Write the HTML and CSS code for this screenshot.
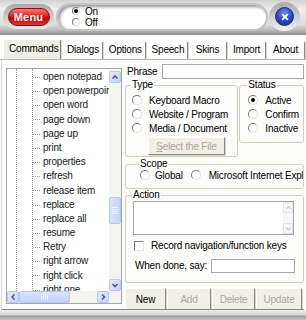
FILE: index.html
```html
<!DOCTYPE html>
<html lang="en">
<head>
    <meta charset="UTF-8">
    <title>Voice Commands</title>
    <link rel="stylesheet" href="styles.css">
</head>
<body>
    <div class="app">
        <header class="topbar">
            <div class="menu-socket">
                <button class="menu-btn">Menu</button>
            </div>
            <div class="mode">
                <label class="mode-opt"><span class="radio checked"></span>On</label>
                <label class="mode-opt"><span class="radio"></span>Off</label>
            </div>
            <div class="close-ring">
                <span class="close-btn">
                    <svg viewBox="0 0 10 10" width="8" height="8">
                        <path d="M2 2 L8 8 M8 2 L2 8" stroke="#fff" stroke-width="2.2" stroke-linecap="round"/>
                    </svg>
                </span>
            </div>
        </header>

        <nav class="tabs">
            <span class="tab active">Commands</span>
            <span class="tab">Dialogs</span>
            <span class="tab">Options</span>
            <span class="tab">Speech</span>
            <span class="tab">Skins</span>
            <span class="tab">Import</span>
            <span class="tab">About</span>
        </nav>

        <main class="panel">
            <div class="tree">
                <div class="tree-view">
                    <div class="tree-level">
                        <ul class="tree-items">
                            <li>open notepad</li>
                            <li>open powerpoint</li>
                            <li>open word</li>
                            <li>page down</li>
                            <li>page up</li>
                            <li>print</li>
                            <li>properties</li>
                            <li>refresh</li>
                            <li>release item</li>
                            <li>replace</li>
                            <li>replace all</li>
                            <li>resume</li>
                            <li>Retry</li>
                            <li>right arrow</li>
                            <li>right click</li>
                            <li>right one</li>
                        </ul>
                    </div>
                </div>
                <div class="vscroll">
                    <span class="sb-btn">
                        <svg viewBox="0 0 8 8" width="8" height="8"><path d="M1.5 5.5 L4 3 L6.5 5.5" fill="none" stroke="#4d6185" stroke-width="1.6"/></svg>
                    </span>
                    <span class="sb-space top"></span>
                    <span class="sb-thumb vertical"></span>
                    <span class="sb-space"></span>
                    <span class="sb-btn">
                        <svg viewBox="0 0 8 8" width="8" height="8"><path d="M1.5 3 L4 5.5 L6.5 3" fill="none" stroke="#4d6185" stroke-width="1.6"/></svg>
                    </span>
                </div>
                <div class="hscroll">
                    <span class="sb-btn">
                        <svg viewBox="0 0 8 8" width="8" height="8"><path d="M5.5 1.5 L3 4 L5.5 6.5" fill="none" stroke="#4d6185" stroke-width="1.6"/></svg>
                    </span>
                    <span class="sb-thumb horizontal"></span>
                    <span class="sb-space"></span>
                    <span class="sb-btn">
                        <svg viewBox="0 0 8 8" width="8" height="8"><path d="M3 1.5 L5.5 4 L3 6.5" fill="none" stroke="#4d6185" stroke-width="1.6"/></svg>
                    </span>
                </div>
                <div class="corner"></div>
            </div>

            <div class="editor">
                <div class="phrase-row">
                    <span class="label">Phrase</span>
                    <span class="field phrase"></span>
                </div>

                <div class="group-row">
                    <fieldset class="group type">
                        <legend>Type</legend>
                        <label class="opt"><span class="radio"></span>Keyboard Macro</label>
                        <label class="opt"><span class="radio"></span>Website / Program</label>
                        <label class="opt"><span class="radio"></span>Media / Document</label>
                        <button class="btn file" disabled><u>S</u>elect the File</button>
                    </fieldset>
                    <fieldset class="group status">
                        <legend>Status</legend>
                        <label class="opt"><span class="radio checked"></span>Active</label>
                        <label class="opt"><span class="radio"></span>Confirm</label>
                        <label class="opt"><span class="radio"></span>Inactive</label>
                    </fieldset>
                </div>

                <fieldset class="group scope">
                    <legend>Scope</legend>
                    <div class="scope-row">
                        <label class="opt"><span class="radio"></span>Global</label>
                        <label class="opt app-opt"><span class="radio"></span>Microsoft Internet Explorer</label>
                    </div>
                </fieldset>

                <fieldset class="group action">
                    <legend>Action</legend>
                    <div class="textarea">
                        <div class="mini-scroll">
                            <span class="mini-btn">
                                <svg viewBox="0 0 8 8" width="7" height="7"><path d="M1.5 5.5 L4 3 L6.5 5.5" fill="none" stroke="#c4c8d0" stroke-width="1.4"/></svg>
                            </span>
                            <span class="mini-btn">
                                <svg viewBox="0 0 8 8" width="7" height="7"><path d="M1.5 3 L4 5.5 L6.5 3" fill="none" stroke="#c4c8d0" stroke-width="1.4"/></svg>
                            </span>
                        </div>
                    </div>
                    <label class="opt check-row"><span class="checkbox"></span>Record navigation/function keys</label>
                    <div class="say-row">
                        <span class="label">When done, say:</span>
                        <span class="field say"></span>
                    </div>
                </fieldset>

                <div class="actions">
                    <button class="btn new">New</button>
                    <button class="btn add" disabled>Add</button>
                    <button class="btn delete" disabled>Delete</button>
                    <button class="btn update" disabled>Update</button>
                </div>
            </div>
        </main>

        <footer class="bottombar"></footer>
    </div>
</body>
</html>
```

FILE: styles.css
```css
:root {
    --text: #000;
    --disabled: #aca899;
    --group-border: #d0d0bf;
    --face: #f1efe6;
    --scroll-blue: #c1d3fb;
}

* {
    margin: 0;
    padding: 0;
    box-sizing: border-box;
}

body {
    font-family: 'Liberation Sans', Arial, sans-serif;
    font-size: 10px;
    letter-spacing: -0.2px;
    color: var(--text);
    background: #fff;
    width: 306px;
    height: 320px;
    overflow: hidden;
}

.app {
    width: 306px;
    height: 320px;
    display: flex;
    flex-direction: column;
    background: #fff;
}

/* top chrome */
.topbar {
    height: 35px;
    flex: none;
    display: flex;
    align-items: center;
    padding: 0 6px 2px 3px;
    background: linear-gradient(#d2d2d2 0, #efefef 25%, #dcdcdc 70%, #b9b9b9 86%, #8c8c8c 100%);
}

.menu-socket {
    width: 51px;
    height: 25px;
    border-radius: 13px;
    padding: 3px 4px;
    background: linear-gradient(#a8a8a8, #e8e8e8);
    display: flex;
    align-items: center;
    justify-content: center;
}

.menu-btn {
    width: 42px;
    height: 18px;
    border-radius: 9px;
    border: 1px solid #8a0c0c;
    background: linear-gradient(#f47a7a 0, #e02020 45%, #c40000 55%, #e23434 100%);
    color: #fff;
    font-family: 'Liberation Sans', Arial, sans-serif;
    font-size: 11px;
    font-weight: bold;
    letter-spacing: 0.2px;
}

.mode {
    flex: 1;
    height: 28px;
    margin-left: 2px;
    border-radius: 14px;
    background: #fff;
    border: 2px solid #c4c4c4;
    box-shadow: inset 2px 2px 3px #9a9a9a;
    display: flex;
    flex-direction: column;
    justify-content: center;
    padding-left: 14px;
    line-height: 11px;
    font-size: 10px;
}

.mode-opt {
    display: flex;
    align-items: center;
    gap: 5px;
}

.mode-opt .radio {
    width: 8px;
    height: 8px;
}

.close-ring {
    width: 31px;
    height: 29px;
    margin-left: 1px;
    border-radius: 50%;
    background: linear-gradient(#a9a9a9, #f2f2f2);
    display: flex;
    align-items: center;
    justify-content: center;
}

.close-btn {
    width: 19px;
    height: 19px;
    border-radius: 50%;
    background: radial-gradient(circle at 50% 30%, #6f8fe8 0, #2446c4 55%, #132e8f 100%);
    border: 1px solid #1a2c72;
    display: flex;
    align-items: center;
    justify-content: center;
}

/* tabs */
.tabs {
    height: 25px;
    flex: none;
    display: flex;
    align-items: flex-end;
    padding: 0 0 0 3px;
    border-bottom: 1px solid #b8b8b0;
}

.tab {
    min-width: 38px;
    height: 17px;
    line-height: 16px;
    padding: 0 5px;
    text-align: center;
    border-right: 1px solid #8a8a80;
    box-shadow: 1px 0 0 #d8d8d0;
    margin-right: 1px;
}

.tab.active {
    height: 19px;
    line-height: 18px;
    background: #efeee6;
    border-left: 1px solid #fff;
}

/* content pane */
.panel {
    flex: 1;
    display: flex;
    align-items: flex-start;
    gap: 3px;
    padding: 4px 0 0 4px;
    margin: 0 2px 0 1px;
    border-left: 1px solid #d8d8d0;
    border-bottom: 1px solid #8a8a80;
    background: #fcfcfa;
    overflow: hidden;
}

.tree {
    width: 117px;
    height: 236px;
    margin-top: 4px;
    border: 1px solid #a7a6aa;
    background: #fff;
    display: grid;
    grid-template-columns: 1fr 12px;
    grid-template-rows: 1fr 12px;
}

.tree-view {
    overflow: hidden;
    padding-left: 9px;
}

.tree-level {
    height: 100%;
    border-left: 1px dotted #a0a0a0;
}

.tree-items {
    list-style: none;
    margin-left: 15px;
    padding-top: 1px;
    height: 100%;
    border-left: 1px dotted #a0a0a0;
    color: #1a1a1a;
}

.tree-items li {
    line-height: 14.2px;
    height: 14.2px;
    white-space: nowrap;
}

.tree-items li::before {
    content: "";
    display: inline-block;
    width: 7px;
    margin-right: 3px;
    vertical-align: middle;
    border-top: 1px dotted #a0a0a0;
}

.vscroll,
.hscroll {
    display: flex;
    background: #f4f4f0;
}

.vscroll {
    flex-direction: column;
    padding-top: 2px;
}

.sb-btn {
    width: 12px;
    height: 12px;
    flex: none;
    border: 1px solid #b4c6f2;
    border-radius: 2px;
    background: linear-gradient(135deg, #e2ebfe, var(--scroll-blue));
    display: flex;
    align-items: center;
    justify-content: center;
}

.sb-space {
    flex: 1;
}

.sb-space.top {
    flex: 0 0 114px;
}

.sb-thumb {
    flex: none;
    border: 1px solid #b4c6f2;
    border-radius: 2px;
    background: linear-gradient(90deg, #d8e4fe, #c4d5fc);
}

.sb-thumb.vertical {
    height: 27px;
    background:
        repeating-linear-gradient(#eef3ff 0 1px, transparent 1px 2px) center / 6px 7px no-repeat,
        linear-gradient(90deg, #d8e4fe, #c4d5fc);
}

.sb-thumb.horizontal {
    width: 51px;
    background:
        repeating-linear-gradient(90deg, #eef3ff 0 1px, transparent 1px 2px) center / 7px 6px no-repeat,
        linear-gradient(#d8e4fe, #c4d5fc);
}

.corner {
    background: #f4f4f0;
}

/* right side */
.editor {
    width: 179px;
    display: flex;
    flex-direction: column;
}

.phrase-row {
    display: flex;
    align-items: center;
    height: 15px;
}

.phrase-row .label {
    width: 37px;
    padding-left: 2px;
}

.field {
    display: block;
    background: #fff;
    border: 1px solid #a7a6aa;
}

.field.phrase {
    flex: 1;
    height: 15px;
}

.group-row {
    display: flex;
    gap: 1px;
    align-items: flex-start;
}

.group {
    border: 1px solid var(--group-border);
    border-radius: 3px;
    padding: 0 6px;
    min-width: 0;
}

.group legend {
    padding: 0 1px;
    line-height: 12px;
    margin-left: -1px;
}

.opt {
    display: flex;
    align-items: center;
    gap: 7px;
    height: 14px;
    white-space: nowrap;
}

.radio {
    width: 10px;
    height: 10px;
    flex: none;
    border-radius: 50%;
    background: #fff;
    border: 1px solid;
    border-color: #7b7b7b #e2e2e2 #e2e2e2 #7b7b7b;
    display: flex;
    align-items: center;
    justify-content: center;
}

.radio.checked::after {
    content: "";
    width: 4px;
    height: 4px;
    border-radius: 50%;
    background: #000;
}

.checkbox {
    width: 10px;
    height: 10px;
    flex: none;
    background: #fff;
    border: 1px solid;
    border-color: #7b7b7b #e8e8e8 #e8e8e8 #7b7b7b;
}

.group.type {
    width: 114px;
    height: 78px;
    padding-top: 2px;
}

.group.status {
    width: 65px;
    height: 64px;
    padding: 2px 0 0 8px;
}

.btn {
    font-family: 'Liberation Sans', Arial, sans-serif;
    font-size: 10px;
    letter-spacing: -0.2px;
    background: var(--face);
    color: var(--text);
    border: 1px solid;
    border-color: #fff #8a8a80 #8a8a80 #fff;
    box-shadow: 1px 1px 0 #d8d6cc;
}

.btn:disabled {
    color: var(--disabled);
}

.btn.file {
    width: 77px;
    height: 18px;
    margin: 2px 0 0 16px;
}

.group.scope {
    margin-top: 1px;
    height: 31px;
    padding: 0 0 0 14px;
}

.scope-row {
    display: flex;
    gap: 8px;
    margin-top: -2px;
    overflow: hidden;
}

.scope-row .opt {
    gap: 5px;
}

.scope-row .app-opt {
    gap: 8px;
}

.group.action {
    height: 94px;
    padding: 0 0 0 7px;
}

.textarea {
    width: 161px;
    height: 34px;
    margin-top: 0;
    background: #fff;
    border: 1px solid #a7a6aa;
    display: flex;
    justify-content: flex-end;
}

.mini-scroll {
    width: 10px;
    display: flex;
    flex-direction: column;
    justify-content: space-between;
    background: #f7f7f5;
}

.mini-btn {
    height: 11px;
    border: 1px solid #e2e3ea;
    display: flex;
    align-items: center;
    justify-content: center;
}

.check-row {
    margin-top: 3px;
    padding-left: 1px;
    height: 15px;
}

.say-row {
    display: flex;
    align-items: center;
    height: 15px;
    margin-top: 5px;
    padding-left: 2px;
    white-space: nowrap;
}

.say-row .label {
    width: 76px;
}

.field.say {
    width: 84px;
    height: 14px;
}

.actions {
    display: flex;
    gap: 1px;
    margin-top: 5px;
}

.actions .btn {
    height: 23px;
}

.btn.new { width: 41px; }
.btn.add { width: 44px; }
.btn.delete { width: 43px; }
.btn.update { width: 46px; }

/* bottom chrome */
.bottombar {
    height: 10px;
    flex: none;
    background: linear-gradient(#ededed 0, #d6d6d6 50%, #9e9e9e 60%, #c4c4c4 100%);
}
```
